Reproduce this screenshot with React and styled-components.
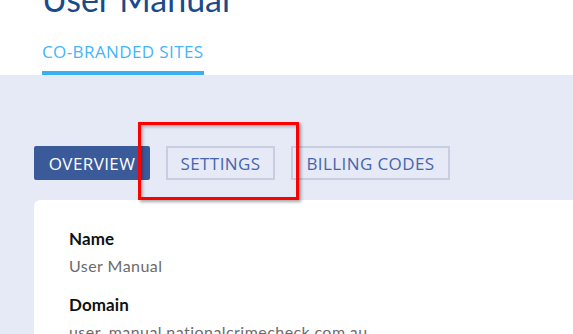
import React from 'react';
import styled, { createGlobalStyle } from 'styled-components';

const Global = createGlobalStyle`
  html, body {
    margin: 0;
    padding: 0;
    background: #ffffff;
    height: 334px;
    overflow: hidden;
  }
  body {
    font-family: Lato, "Open Sans", sans-serif;
  }
`;

const Page = styled.div`
  position: relative;
  width: 573px;
  height: 334px;
  overflow: hidden;
`;

const Header = styled.header`
  padding: 0 42px;
  display: flex;
  flex-direction: column;
  align-items: flex-start;
`;

const Title = styled.h1`
  margin: -21px 0 0;
  font-family: Lato, sans-serif;
  font-weight: 400;
  font-size: 34px;
  line-height: 40px;
  color: #1b4a8c;
`;

const NavTab = styled.div`
  margin-top: 23px;
  padding-bottom: 9px;
  border-bottom: 4px solid #3aaff7;
  font-family: "Open Sans", sans-serif;
  font-size: 17px;
  line-height: 20px;
  color: #45b5fa;
  letter-spacing: 0.4px;
`;

const Band = styled.section`
  background: #e6e9f6;
  padding: 71px 0 0 34px;
  height: 400px;
`;

const TabRow = styled.div`
  display: flex;
  gap: 16px;
`;

const Tab = styled.button`
  width: ${(p) => p.$width}px;
  height: 34px;
  box-sizing: border-box;
  padding: 0;
  font-family: "Open Sans", sans-serif;
  font-size: 17px;
  letter-spacing: 0.4px;
  text-transform: uppercase;
  cursor: pointer;
  border: 2px solid ${(p) => (p.$active ? '#3b5a99' : '#c9cde0')};
  background: ${(p) => (p.$active ? '#3b5a99' : 'transparent')};
  color: ${(p) => (p.$active ? '#ffffff' : '#4566ae')};
  border-radius: ${(p) => (p.$active ? '2px' : '0')};
`;

const Card = styled.div`
  margin-top: 20px;
  background: #ffffff;
  border-top-left-radius: 6px;
  padding: 29px 35px;
`;

const Label = styled.div`
  font-family: Lato, sans-serif;
  font-weight: 700;
  font-size: 17px;
  line-height: 20px;
  letter-spacing: 0.1px;
  color: #111111;
`;

const Value = styled.div`
  margin-top: 7px;
  margin-bottom: 19px;
  font-family: Lato, sans-serif;
  font-size: 16px;
  line-height: 20px;
  letter-spacing: 0.45px;
  color: #6b6b6b;
`;

const Highlight = styled.div`
  position: absolute;
  left: 138px;
  top: 122px;
  width: 161px;
  height: 78px;
  box-sizing: border-box;
  border: 3px solid #ff0000;
  box-shadow: 2px 2px 3px rgba(0, 0, 0, 0.35), inset 2px 2px 3px rgba(0, 0, 0, 0.25);
  pointer-events: none;
`;

const tabs = [
  { label: 'Overview', width: 116, active: true },
  { label: 'Settings', width: 109 },
  { label: 'Billing Codes', width: 159 },
];

export default function App() {
  return (
    <Page>
      <Global />
      <Header>
        <Title>User Manual</Title>
        <NavTab>CO-BRANDED SITES</NavTab>
      </Header>
      <Band>
        <TabRow>
          {tabs.map((t) => (
            <Tab key={t.label} $active={t.active} $width={t.width}>
              {t.label}
            </Tab>
          ))}
        </TabRow>
        <Card>
          <Label>Name</Label>
          <Value>User Manual</Value>
          <Label>Domain</Label>
          <Value>user_manual.nationalcrimecheck.com.au</Value>
        </Card>
      </Band>
      <Highlight />
    </Page>
  );
}
